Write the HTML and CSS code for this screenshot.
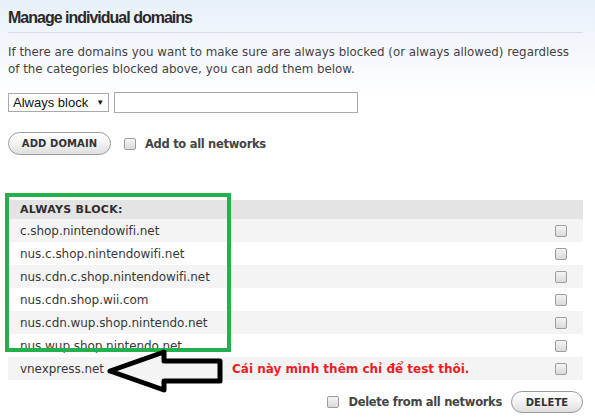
FILE: index.html
```html
<!DOCTYPE html>
<html lang="en">
<head>
<meta charset="utf-8">
<title>Manage individual domains</title>
<link rel="stylesheet" href="styles.css">
</head>
<body>
<div class="page">
  <h2 class="title">Manage individual domains</h2>
  <p class="intro">If there are domains you want to make sure are always blocked (or always allowed) regardless of the categories blocked above, you can add them below.</p>
  <div class="add-row">
    <div class="select"><span>Always block</span><span class="caret">&#9660;</span></div>
    <input class="domain-input" type="text">
  </div>
  <div class="btn-row">
    <button class="pill add-btn">ADD DOMAIN</button>
    <label class="check-label"><input class="cb" type="checkbox">Add to all networks</label>
  </div>
  <table class="domains">
    <thead>
      <tr><th colspan="2">ALWAYS BLOCK:</th></tr>
    </thead>
    <tbody>
      <tr><td>c.shop.nintendowifi.net</td><td class="c"><input class="cb" type="checkbox"></td></tr>
      <tr><td>nus.c.shop.nintendowifi.net</td><td class="c"><input class="cb" type="checkbox"></td></tr>
      <tr><td>nus.cdn.c.shop.nintendowifi.net</td><td class="c"><input class="cb" type="checkbox"></td></tr>
      <tr><td>nus.cdn.shop.wii.com</td><td class="c"><input class="cb" type="checkbox"></td></tr>
      <tr><td>nus.cdn.wup.shop.nintendo.net</td><td class="c"><input class="cb" type="checkbox"></td></tr>
      <tr><td>nus.wup.shop.nintendo.net</td><td class="c"><input class="cb" type="checkbox"></td></tr>
      <tr><td>vnexpress.net</td><td class="c"><input class="cb" type="checkbox"></td></tr>
    </tbody>
  </table>
  <div class="footer">
    <label class="check-label"><input class="cb" type="checkbox">Delete from all networks</label>
    <button class="pill del-btn">DELETE</button>
  </div>

  <div class="annot-box"></div>
  <svg class="annot-arrow" width="130" height="52" viewBox="0 0 130 52">
    <polygon points="10,26 64,7 64,16 120,16 120,36 64,36 64,45" fill="none" stroke="#000" stroke-width="5" stroke-linejoin="round"/>
  </svg>
  <span class="annot-note">Cái này mình thêm chỉ để test thôi.</span>
</div>
</body>
</html>
```
FILE: styles.css
```css
* { box-sizing: border-box; }
html, body { margin: 0; padding: 0; }
body {
  width: 595px;
  height: 418px;
  overflow: hidden;
  background: linear-gradient(#e8f0f9 0px, #ffffff 95px) no-repeat;
  background-color: #fff;
  font-family: "DejaVu Sans", Verdana, sans-serif;
  color: #444;
}
.page {
  position: relative;
  margin: 0 12px 0 8px;
  width: 575px;
}
h2.title {
  margin: 0;
  padding: 7px 0 3px;
  height: 33px;
  line-height: 22px;
  font-family: "Liberation Sans", Arial, sans-serif;
  font-size: 16px;
  font-weight: 700;
  letter-spacing: -1px;
  color: #2a2a2a;
  border-bottom: 1px solid #dcdcdc;
}
.intro {
  margin: 11px 0 0;
  max-width: 572px;
  font-size: 11.85px;
  line-height: 17px;
  color: #463f42;
}
.add-row {
  margin-top: 14px;
  display: flex;
  align-items: center;
  gap: 5px;
  height: 21px;
}
.select {
  width: 101px;
  height: 19px;
  border: 1px solid #a9a9a9;
  background: #fff;
  display: flex;
  align-items: center;
  padding: 0 0 0 4px;
  font-family: "Liberation Sans", Arial, sans-serif;
  font-size: 13px;
  color: #111;
  gap: 8px;
}
.caret { font-size: 8px; color: #111; }
.domain-input {
  width: 244px;
  height: 21px;
  border: 1px solid #a9a9a9;
  margin: 0;
  padding: 0;
  background: #fff;
}
.btn-row {
  margin-top: 19px;
  display: flex;
  align-items: center;
  gap: 13px;
  height: 23px;
}
.pill {
  margin: 0;
  padding: 0;
  border: 1px solid #9a9a9a;
  border-radius: 12px;
  background: linear-gradient(#ffffff, #f2f2f2 50%, #dedede);
  font-family: "DejaVu Sans", Verdana, sans-serif;
  font-weight: bold;
  font-size: 10px;
  color: #333;
  letter-spacing: 0.1px;
}
.add-btn { width: 103px; height: 23px; }
.del-btn { width: 72px; height: 22px; }
.check-label {
  display: flex;
  align-items: center;
  gap: 9px;
  font-size: 11.5px;
  font-weight: bold;
  letter-spacing: -0.3px;
  color: #444;
}
.cb {
  appearance: none;
  -webkit-appearance: none;
  margin: 0;
  width: 12px;
  height: 12px;
  border: 1px solid #9d9d9d;
  border-radius: 2px;
  background: linear-gradient(#f4f4f4, #dadada);
  display: block;
}
.domains {
  margin-top: 45px;
  width: 575px;
  border-collapse: collapse;
  font-size: 12px;
  letter-spacing: -0.05px;
  color: #383838;
}
.domains th {
  text-align: left;
  height: 19px;
  padding: 0 0 0 12px;
  background: #e4e4e4;
  font-size: 11px;
  font-weight: bold;
  color: #2e2e2e;
  letter-spacing: 0.3px;
}
.domains td {
  height: 23px;
  padding: 0 0 0 12px;
}
.domains td.c { width: 30px; padding: 0 16px 0 0; }
.domains td.c .cb { margin-left: auto; }
.domains tbody tr:nth-child(odd) { background: #f4f4f4; }
.domains tbody tr:nth-child(even) { background: #fff; }
.footer {
  margin-top: 11px;
  display: flex;
  justify-content: flex-end;
  align-items: center;
  gap: 9px;
  height: 22px;
}
.annot-box {
  position: absolute;
  left: -3px;
  top: 193px;
  width: 226px;
  height: 159px;
  border: 4px solid #22b14c;
}
.annot-arrow {
  position: absolute;
  left: 92px;
  top: 345px;
}
.annot-note {
  position: absolute;
  left: 224px;
  top: 362px;
  font-size: 12px;
  font-weight: bold;
  color: #ed1c24;
  white-space: nowrap;
}
```
